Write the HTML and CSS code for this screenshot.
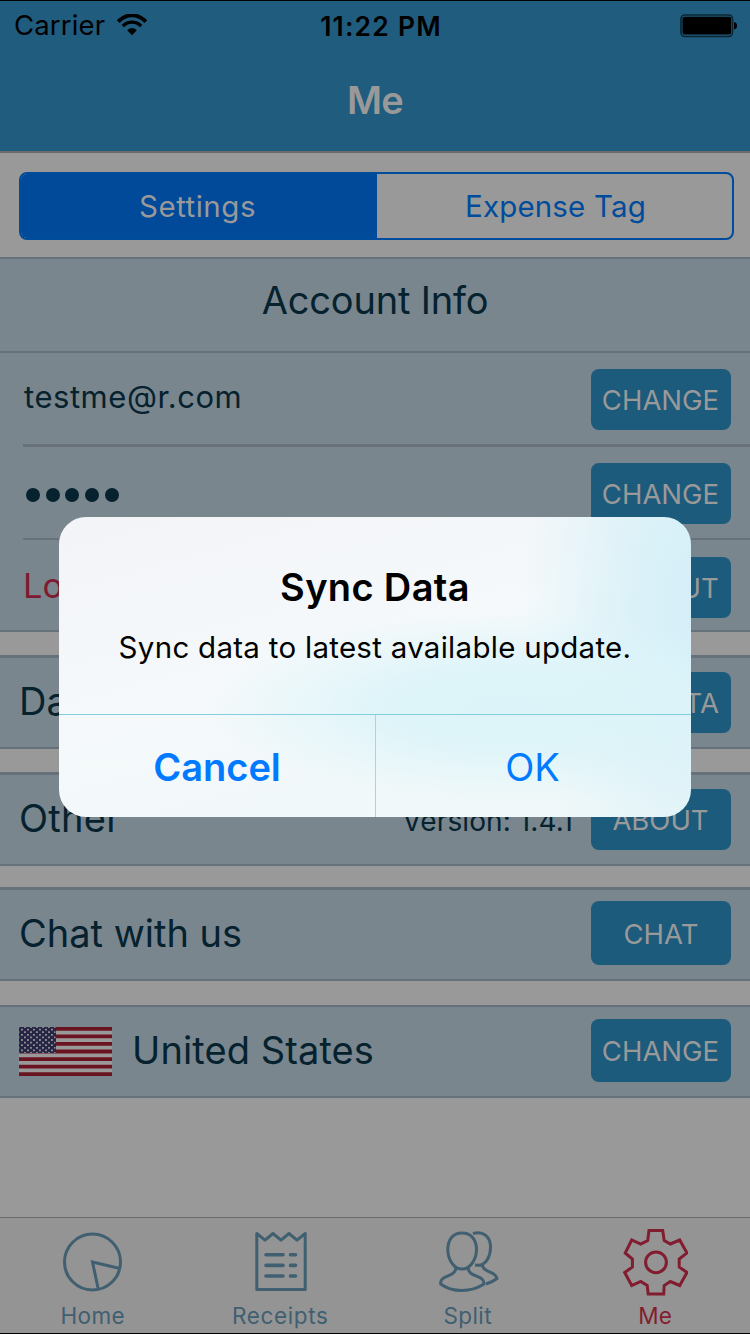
FILE: index.html
```html
<!DOCTYPE html>
<html lang="en">
<head>
<meta charset="utf-8">
<title>Me</title>
<link rel="stylesheet" href="styles.css">
</head>
<body>
<div class="screen">
  <header class="nav">
    <div class="status">
      <div class="status-left">
        <span class="carrier">Carrier</span>
        <svg class="wifi" width="30" height="22" viewBox="0 0 30 22">
          <path d="M1.2 7.6C9 -.6 21 -.6 28.8 7.6" fill="none" stroke="#000" stroke-width="3.8"/>
          <path d="M5.8 12.1C11.2 6.8 18.8 6.8 24.2 12.1" fill="none" stroke="#000" stroke-width="3.4"/>
          <path d="M10.2 16.2Q15 12 19.8 16.2L15 21.2Z" fill="#000"/>
        </svg>
      </div>
      <span class="clock">11:22 PM</span>
      <div class="status-right">
        <svg class="battery" width="58" height="24" viewBox="0 0 58 24">
          <rect x="1" y="1" width="51.5" height="21.5" rx="4" fill="none" stroke="#0a2432" stroke-width="1.6"/>
          <rect x="2.5" y="2.8" width="48.6" height="17.6" rx="2" fill="#000"/>
          <path d="M54 8Q57 8.6 57 11.8T54 15.6Z" fill="#000"/>
        </svg>
      </div>
    </div>
    <h1 class="nav-title">Me</h1>
  </header>

  <div class="segments">
    <div class="segment segment-on"><span>Settings</span></div>
    <div class="segment segment-off"><span>Expense Tag</span></div>
  </div>

  <section class="group group-account">
    <h2 class="heading"><span>Account Info</span></h2>
    <div class="row row-email">
      <span class="label label-email">testme@r.com</span>
      <span class="btn">CHANGE</span>
    </div>
    <div class="row row-inset row-pass">
      <div class="dots"><i></i><i></i><i></i><i></i><i></i></div>
      <span class="btn">CHANGE</span>
    </div>
    <div class="row row-inset row-logout">
      <span class="label label-logout">Logout</span>
      <span class="btn btn-logout">LOGOUT</span>
    </div>
  </section>

  <section class="group group-single">
    <div class="row"><span class="label">Data</span><span class="btn btn-sync">SYNC DATA</span></div>
  </section>
  <section class="group group-single">
    <div class="row"><span class="label label-other">Other</span><span class="version">Version: 1.4.1</span><span class="btn btn-about">ABOUT</span></div>
  </section>
  <section class="group group-chat">
    <div class="row"><span class="label">Chat with us</span><span class="btn btn-tall">CHAT</span></div>
  </section>
  <section class="group group-country">
    <div class="row">
      <svg class="flag" width="93" height="49" viewBox="0 0 93 49">
        <defs>
          <pattern id="stars" width="6" height="5.2" patternUnits="userSpaceOnUse">
            <rect x="2" y="1.8" width="1.9" height="1.6" fill="#999"/>
            <rect x="5" y="4.4" width="1" height=".8" fill="#999"/>
            <rect x="0" y="4.4" width=".9" height=".8" fill="#999"/>
            <rect x="5" y="0" width="1" height=".8" fill="#999"/>
            <rect x="0" y="0" width=".9" height=".8" fill="#999"/>
          </pattern>
        </defs>
        <rect width="93" height="49" fill="#6b1421"/>
        <path d="M0 5.65H93M0 13.19H93M0 20.73H93M0 28.27H93M0 35.81H93M0 43.35H93" stroke="#999" stroke-width="3.77"/>
        <rect width="37" height="26" fill="#262545"/>
        <rect x=".5" width="36" height="26" fill="url(#stars)"/>
      </svg>
      <span class="label label-country">United States</span>
      <span class="btn btn-medium">CHANGE</span>
    </div>
  </section>

  <nav class="tabs">
    <div class="tab">
      <svg width="66" height="68" viewBox="0 0 66 68" class="icon">
        <circle cx="32.5" cy="34" r="28"/>
        <path d="M38 60L32.5 34L59 40.2"/>
      </svg>
      <span class="tab-name">Home</span>
    </div>
    <div class="tab">
      <svg width="66" height="68" viewBox="0 0 66 68" class="icon">
        <path stroke-linejoin="round" d="M9.8 5.5L18 12.2L26 5.5L34 12.2L42 5.5L50 12.2L58.2 5.5V61.5H9.8Z"/>
        <path class="round" d="M19 26.7H36M43.5 26.7H48.5M19 37.4H36M43.5 37.4H48.5M19 48H36M43.5 48H48.5"/>
      </svg>
      <span class="tab-name name-receipts">Receipts</span>
    </div>
    <div class="tab">
      <svg width="66" height="68" viewBox="0 0 66 68" class="icon">
        <path d="M27 5C17.5 5 12.8 12 12.8 21.5C12.8 31 18.5 41 27 41S41.500 31 41.500 21.5C41.500 12 36.500 5 27 5Z"/>
        <path d="M21 39.5C20.500 50 4.500 46.5 5.700 56C11.500 60.5 19.500 62.5 27 62.5S43 60 49 56C49.500 46.5 33.500 50 33 39.5"/>
        <path d="M38 5.5C48.500 2.5 55.500 9 55.500 19C55.500 29 50.500 37.3 43.500 37.3L40 37M47.500 37.5C48.500 45 60.500 42.5 62 50.5Q57.500 54 51 56"/>
      </svg>
      <span class="tab-name">Split</span>
    </div>
    <div class="tab tab-on">
      <svg width="66" height="68" viewBox="0 0 66 68" class="icon">
        <g transform="translate(.7 0)">
          <path d="M26.3 2.500H40L41.500 12.500L47.700 16L57 12L64.300 25L56.500 31V39L64.300 44.500L57 57.500L47.700 53.500L41.500 57.500L41 66H25.500L24.500 57.500L18 53.500L9 57.500L2 44.500L9.700 39V31L2.500 25L9 12L18 16L25 12.500Z"/>
          <circle cx="33.3" cy="34.3" r="10.4"/>
        </g>
      </svg>
      <span class="tab-name">Me</span>
    </div>
  </nav>

  <div class="alert">
    <div class="alert-body">
      <h3 class="alert-title">Sync Data</h3>
      <p class="alert-text">Sync data to latest available update.</p>
    </div>
    <div class="alert-actions">
      <div class="action action-cancel"><span>Cancel</span></div>
      <div class="action action-ok"><span>OK</span></div>
    </div>
  </div>
</div>
</body>
</html>
```
FILE: styles.css
```css
* { box-sizing: border-box; }
body { margin: 0; font-family: Inter, "Liberation Sans", sans-serif; }
h1, h2, h3, p { margin: 0; font-weight: 400; }
svg { display: block; flex: none; }

.screen {
  position: relative;
  display: flex;
  flex-direction: column;
  width: 750px;
  height: 1334px;
  overflow: hidden;
  background: #999;
  border-top: 1px solid #000;
  border-bottom: 1px solid #000;
  color: #05222e;
  white-space: nowrap;
}

/* header */
.nav { height: 152px; background: #205c7e; border-bottom: 2px solid #6b6b6e; flex: none; }
.status { display: grid; grid-template-columns: 1fr auto 1fr; height: 49px; align-items: center; padding: 0 12px 0 14px; color: #000; }
.status-left { display: flex; align-items: center; gap: 12px; }
.status-right { display: flex; justify-content: flex-end; }
.carrier { font-size: 27.5px; letter-spacing: .15px; margin-bottom: 1px; }
.wifi { margin: 0 0 1px; }
.clock { font-size: 26.5px; font-weight: 600; letter-spacing: 1.2px; margin: 0 0 0 10px; }
.nav-title { text-align: center; font-size: 38px; line-height: 44px; font-weight: 600; letter-spacing: -.7px; color: #999; margin-top: 28px; }

/* segmented control */
.segments { display: flex; height: 68px; margin: 19px 16px 17px 19px; border: 2px solid #004c9c; border-radius: 8px; flex: none; overflow: hidden; font-size: 29.5px; letter-spacing: .5px; }
.segment { flex: 1; display: flex; align-items: center; justify-content: center; color: #004c9c; }
.segment-on { background: #004a99; color: #999; padding-right: 3px; }
.segment-off { letter-spacing: .15px; padding-left: 2px; }

/* settings groups */
.group { background: #7a868e; border-top: 2px solid #67717b; border-bottom: 2px solid #67717b; flex: none; }
.group-account { height: 375px; margin-bottom: 23px; }
.group-single { height: 94px; border-top-width: 3px; margin-bottom: 23px; }
.group-single + .group-chat { margin-top: -2px; }
.group-chat { height: 94px; border-top-width: 3px; margin-bottom: 24px; }
.group-country { height: 93px; }
.heading { height: 94px; padding-top: 20px; border-bottom: 2px solid #67707b; text-align: center; font-size: 38px; line-height: 42px; letter-spacing: -.2px; }
.row { display: flex; align-items: flex-start; padding: 0 19px 0 20px; }
.row-email { height: 91px; padding-left: 24px; }
.row-inset { margin-left: 23px; padding-left: 0; border-top: 3px solid #67707b; height: 94px; }
.row-logout { border-top-width: 2px; height: 92px; }
.label { font-size: 38px; line-height: 40px; margin: 23px 0 0 -1px; }
.label-email { font-size: 31px; letter-spacing: .55px; margin: 24px 0 0; }
.label-logout { font-size: 34.5px; margin: 26px 0 0; color: #801a30; }
.label-other { letter-spacing: .3px; }
.label-country { margin-left: 0; letter-spacing: .1px; }
.dots { display: flex; gap: 5.7px; margin: 41px 0 0 3px; }
.dots i { width: 14px; height: 14px; border-radius: 50%; background: #05222e; }
.version { font-size: 28px; line-height: 40px; letter-spacing: .1px; margin: 26px 18px 0 auto; }
.btn { width: 140px; height: 61px; margin: 14px 0 0 auto; padding-right: 1px; border-radius: 8px; background: #1c5b7c; color: #999; font-size: 27.5px; line-height: 62px; text-align: center; flex: none; }
.row-email .btn, .row-pass .btn { margin-top: 16px; }
.row-logout .btn { margin-top: 17px; }
.row .btn-logout { padding-right: 0; }
.version + .btn { margin-left: 0; }
.btn-sync { width: 169px; padding-right: 10px; }
.btn-tall { height: 64px; margin-top: 11px; line-height: 66px; padding-right: 0; }
.btn-medium { height: 63px; margin-top: 12px; line-height: 64px; }
.flag { margin: 20px 20px 0 -1px; }

/* tab bar */
.tabs { display: flex; height: 116px; margin-top: auto; border-top: 1px solid #6b6b6c; background: #949494; color: #405f71; flex: none; }
.tab { flex: 1; display: flex; flex-direction: column; align-items: center; padding: 10px 1px 0 0; margin-left: -1px; }
.tab-on { color: #821d30; }
.icon { fill: none; stroke: currentColor; stroke-width: 3; }
.round { stroke-linecap: round; stroke-width: 3.6; }
.tab-name { font-size: 22.5px; line-height: 28px; margin-top: 6px; letter-spacing: .4px; }
.name-receipts { letter-spacing: .6px; }

/* dialog */
.alert {
  position: absolute;
  left: 59px;
  top: 516px;
  width: 632px;
  height: 300px;
  border-radius: 27px;
  overflow: hidden;
  color: #000;
  background:
    radial-gradient(ellipse 300px 95px at 450px 190px, #dcf4f9 0%, rgba(220, 244, 249, .9) 40%, rgba(220, 244, 249, 0) 100%),
    radial-gradient(ellipse 180px 330px at 642px 90px, #d4eef8 0%, #daf1f8 35%, rgba(219, 242, 248, 0) 100%),
    linear-gradient(165deg, #f3f4f7 0%, #f5f9fb 45%, #eff8f8 100%);
}
.alert-body { height: 197px; padding-top: 48px; text-align: center; }
.alert-title { font-size: 38px; line-height: 44px; font-weight: 600; letter-spacing: .35px; }
.alert-text { font-size: 29.5px; line-height: 36px; letter-spacing: .28px; margin-top: 20px; }
.alert-actions { display: flex; height: 103px; border-top: 1px solid #83cfe0; color: #007aff; }
.action { display: flex; justify-content: center; padding-top: 30px; font-size: 38px; line-height: 44px; }
.action-cancel { width: 317px; font-weight: 600; border-right: 1px solid #9fdae4; }
.action-ok { flex: 1; padding-right: 2px; }
```
